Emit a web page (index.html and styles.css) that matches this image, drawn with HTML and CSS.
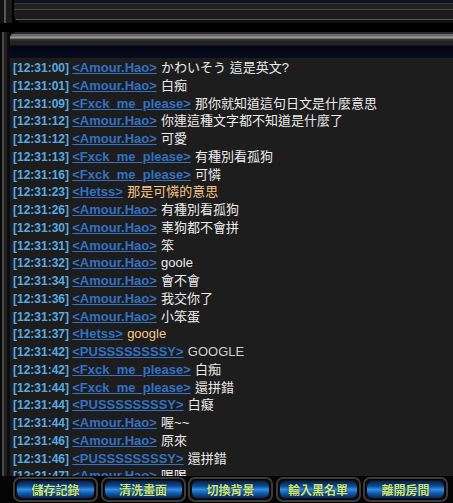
FILE: index.html
```html
<!DOCTYPE html>
<html>
<head>
<meta charset="utf-8">
<link rel="stylesheet" href="styles.css">
</head>
<body>
<div class="app">
  <div class="top-frame"><div class="top-inner"></div></div>
  <div class="gap"></div>
  <div class="panel">
    <div class="side"></div>
    <div class="main">
      <div class="head"><div class="head-metal"></div><div class="head-navy"></div></div>
      <div class="chat">
        <div class="line"><span class="ts">[12:31:00]</span> <span class="nm">&lt;Amour.Hao&gt;</span> <span class="msg">かわいそう 這是英文?</span></div>
        <div class="line"><span class="ts">[12:31:01]</span> <span class="nm">&lt;Amour.Hao&gt;</span> <span class="msg">白痴</span></div>
        <div class="line"><span class="ts">[12:31:09]</span> <span class="nm">&lt;Fxck_me_please&gt;</span> <span class="msg">那你就知道這句日文是什麼意思</span></div>
        <div class="line"><span class="ts">[12:31:12]</span> <span class="nm">&lt;Amour.Hao&gt;</span> <span class="msg">你連這種文字都不知道是什麼了</span></div>
        <div class="line"><span class="ts">[12:31:12]</span> <span class="nm">&lt;Amour.Hao&gt;</span> <span class="msg">可愛</span></div>
        <div class="line"><span class="ts">[12:31:13]</span> <span class="nm">&lt;Fxck_me_please&gt;</span> <span class="msg">有種別看孤狗</span></div>
        <div class="line"><span class="ts">[12:31:16]</span> <span class="nm">&lt;Fxck_me_please&gt;</span> <span class="msg">可憐</span></div>
        <div class="line"><span class="ts">[12:31:23]</span> <span class="nm">&lt;Hetss&gt;</span> <span class="msg orange">那是可憐的意思</span></div>
        <div class="line"><span class="ts">[12:31:26]</span> <span class="nm">&lt;Amour.Hao&gt;</span> <span class="msg">有種別看孤狗</span></div>
        <div class="line"><span class="ts">[12:31:30]</span> <span class="nm">&lt;Amour.Hao&gt;</span> <span class="msg">辜狗都不會拼</span></div>
        <div class="line"><span class="ts">[12:31:31]</span> <span class="nm">&lt;Amour.Hao&gt;</span> <span class="msg">笨</span></div>
        <div class="line"><span class="ts">[12:31:32]</span> <span class="nm">&lt;Amour.Hao&gt;</span> <span class="msg">goole</span></div>
        <div class="line"><span class="ts">[12:31:34]</span> <span class="nm">&lt;Amour.Hao&gt;</span> <span class="msg">會不會</span></div>
        <div class="line"><span class="ts">[12:31:36]</span> <span class="nm">&lt;Amour.Hao&gt;</span> <span class="msg">我交你了</span></div>
        <div class="line"><span class="ts">[12:31:37]</span> <span class="nm">&lt;Amour.Hao&gt;</span> <span class="msg">小笨蛋</span></div>
        <div class="line"><span class="ts">[12:31:37]</span> <span class="nm">&lt;Hetss&gt;</span> <span class="msg orange">google</span></div>
        <div class="line"><span class="ts">[12:31:42]</span> <span class="nm">&lt;PUSSSSSSSSY&gt;</span> <span class="msg gray">GOOGLE</span></div>
        <div class="line"><span class="ts">[12:31:42]</span> <span class="nm">&lt;Fxck_me_please&gt;</span> <span class="msg">白痴</span></div>
        <div class="line"><span class="ts">[12:31:44]</span> <span class="nm">&lt;Fxck_me_please&gt;</span> <span class="msg">還拼錯</span></div>
        <div class="line"><span class="ts">[12:31:44]</span> <span class="nm">&lt;PUSSSSSSSSY&gt;</span> <span class="msg">白癡</span></div>
        <div class="line"><span class="ts">[12:31:44]</span> <span class="nm">&lt;Amour.Hao&gt;</span> <span class="msg">喔~~</span></div>
        <div class="line"><span class="ts">[12:31:46]</span> <span class="nm">&lt;Amour.Hao&gt;</span> <span class="msg">原來</span></div>
        <div class="line"><span class="ts">[12:31:46]</span> <span class="nm">&lt;PUSSSSSSSSY&gt;</span> <span class="msg">還拼錯</span></div>
        <div class="line"><span class="ts">[12:31:47]</span> <span class="nm">&lt;Amour.Hao&gt;</span> <span class="msg">喝喝</span></div>
      </div>
    </div>
  </div>
  <div class="buttons">
    <div class="btn"><span>儲存記錄</span></div>
    <div class="btn"><span>清洗畫面</span></div>
    <div class="btn"><span>切換背景</span></div>
    <div class="btn"><span>輸入黑名單</span></div>
    <div class="btn"><span>離開房間</span></div>
  </div>
</div>
</body>
</html>
```
FILE: styles.css
```css
html, body {
  margin: 0;
  padding: 0;
  background: #000;
}
.app {
  width: 453px;
  height: 503px;
  overflow: hidden;
  display: flex;
  flex-direction: column;
  background: #000;
}
.top-frame {
  height: 23px;
  flex: none;
  background: linear-gradient(90deg, #111 0 4px, #555 4px 6px, #1a1a1a 6px 12px, transparent 12px);
}
.top-inner {
  margin-left: 14px;
  height: 23px;
  border-radius: 0 0 0 8px;
  background: linear-gradient(#0c1426 0 3px, #3a3a3a 3px 4px, #202020 4px 9px, #4a4a4a 9px 10px, #1c1c1c 10px 19px, #5a5a5a 19px 20px, #0e0e0e 20px);
}
.gap {
  height: 9px;
  flex: none;
  background: #000;
}
.panel {
  flex: 1;
  display: flex;
  min-height: 0;
}
.side {
  width: 10px;
  flex: none;
  background: linear-gradient(90deg, #080808 0 2px, #4a4a4a 2px 4px, #202020 4px 7px, #0c0c0c 7px);
}
.main {
  flex: 1;
  display: flex;
  flex-direction: column;
  min-width: 0;
}
.head {
  flex: none;
  height: 26px;
  display: flex;
  flex-direction: column;
}
.head-metal {
  height: 14px;
  border-radius: 6px 0 0 0;
  background: linear-gradient(#2a2a2a 0 2px, #6a6a6a 2px 4px, #9a9a9a 5px 6px, #3a3a3a 7px, #1e1e1e 10px, #262626 12px, #101010 14px);
}
.head-navy {
  flex: 1;
  background: linear-gradient(#020512, #070c1e);
}
.chat {
  flex: 1;
  background: #1d1d1d;
  padding: 1px 0 0 3px;
  overflow: hidden;
  font-size: 13px;
  line-height: 17.75px;
  white-space: nowrap;
}
.line {
  height: 17.75px;
}
.ts {
  font-family: "Liberation Sans", Arial, sans-serif;
  font-weight: bold;
  font-size: 12px;
  color: #5aaae0;
}
.nm {
  font-family: "Liberation Sans", Arial, sans-serif;
  font-weight: bold;
  font-size: 13px;
  color: #3471c2;
  text-decoration: underline;
}
.msg {
  font-family: "Liberation Sans", "Noto Sans CJK TC", sans-serif;
  font-size: 13px;
  color: #ececec;
  margin-left: 1px;
}
.msg.orange {
  color: #f6c88c;
}
.msg.gray {
  color: #cfcfcf;
}
.buttons {
  flex: none;
  height: 27px;
  display: flex;
  gap: 2.5px;
  padding: 0 0 0 13px;
  align-items: center;
  background: #050505;
}
.btn {
  width: 85px;
  height: 25px;
  box-sizing: border-box;
  border: 2px solid #3c3c3c;
  border-radius: 7px;
  background: #111;
  padding: 2px 2px;
  display: flex;
  box-shadow: inset 0 0 0 1px #000;
}
.btn span {
  flex: 1;
  border-radius: 6px;
  background: linear-gradient(#06214a, #0f4a92 30%, #2d8ee4 50%, #155fb2 70%, #06275a);
  color: #cfe679;
  font-family: "Noto Sans CJK TC", sans-serif;
  font-weight: bold;
  font-size: 12px;
  line-height: 17px;
  text-align: center;
  text-shadow: 0 0 2px #02152e;
}
```
